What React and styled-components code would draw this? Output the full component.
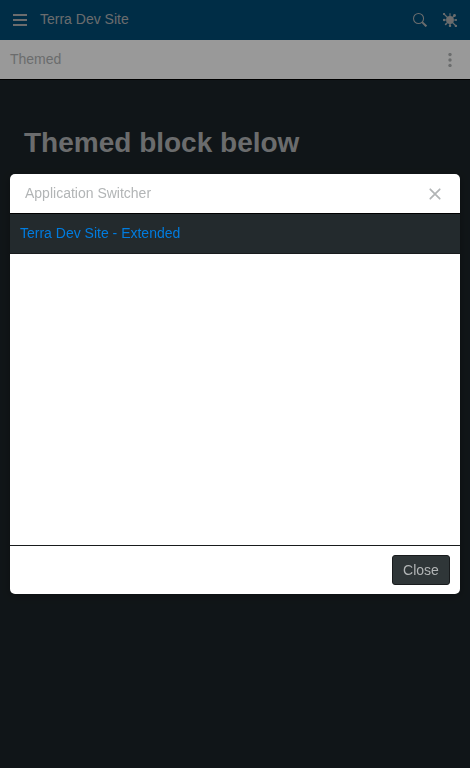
import React from 'react';
import styled, { createGlobalStyle } from 'styled-components';

const GlobalStyle = createGlobalStyle`
  *, *::before, *::after { box-sizing: border-box; }
  html, body { margin: 0; padding: 0; overflow: hidden; background: #111518; }
  body { font-family: "Liberation Sans", Arial, sans-serif; font-size: 14px; line-height: 1.4; }
`;

const Page = styled.div`
  height: 100vh;
  background: #1c2428;
`;

const NavBar = styled.header`
  display: flex;
  align-items: center;
  height: 40px;
  background: #004c76;
  color: #b2b5b6;
`;

const IconButton = styled.button`
  display: flex;
  align-items: center;
  justify-content: center;
  width: ${({ $width }) => $width || 30}px;
  height: 100%;
  padding: 0;
  border: 0;
  background: transparent;
  color: inherit;
`;

const NavTitle = styled.div`
  flex: 1;
  line-height: 20px;
  padding-bottom: 2px;
`;

const NavTools = styled.div`
  display: flex;
  height: 100%;
  padding-right: 5px;
`;

const SubBar = styled.div`
  display: flex;
  align-items: center;
  justify-content: space-between;
  height: 40px;
  padding: 0 5px 0 10px;
  background: #fff;
  border-bottom: 1px solid #000;
  color: #b2b5b6;
`;

const Heading = styled.h1`
  margin: 0;
  padding: 43px 24px 0;
  font-size: 28px;
  line-height: 40px;
  color: #b2b5b6;
`;

const Overlay = styled.div`
  position: fixed;
  inset: 0;
  display: flex;
  align-items: center;
  justify-content: center;
  padding: 0 10px;
  background: rgba(0, 0, 0, 0.4);
`;

const Dialog = styled.section`
  display: flex;
  flex-direction: column;
  width: 100%;
  height: 420px;
  overflow: hidden;
  border-radius: 5px;
  background: #fff;
  box-shadow: 0 2px 8px rgba(0, 0, 0, 0.3);
`;

const DialogHeader = styled.header`
  display: flex;
  align-items: center;
  justify-content: space-between;
  flex: none;
  height: 40px;
  padding: 0 10px 0 15px;
  border-bottom: 1px solid #000;
  color: #b2b5b6;
`;

const DialogBody = styled.div`
  flex: 1;
`;

const AppLink = styled.a`
  display: flex;
  align-items: center;
  height: 40px;
  padding: 0 10px;
  background: #232a2d;
  border-bottom: 1px solid #181b1d;
  color: #007cdf;
  text-decoration: none;
`;

const DialogFooter = styled.footer`
  display: flex;
  align-items: center;
  justify-content: flex-end;
  flex: none;
  height: 49px;
  padding: 0 10px;
  border-top: 1px solid #181b1d;
`;

const CloseButton = styled.button`
  width: 58px;
  height: 30px;
  padding: 0;
  border: 1px solid #181b1d;
  border-radius: 3px;
  background: #2f3638;
  color: #b2b5b6;
  font: inherit;
  line-height: 20px;
`;

const MenuIcon = () => (
  <svg width="14" height="14" viewBox="0 0 14 14" fill="currentColor">
    <path d="M0 1h14v2H0zM0 6h14v2H0zM0 11h14v2H0z" />
  </svg>
);

const SearchIcon = () => (
  <svg width="14" height="14" viewBox="0 0 48 48" fill="none" stroke="currentColor">
    <circle cx="19" cy="19" r="17.2" strokeWidth="3.6" />
    <path d="M31 31l3 3" strokeWidth="4" />
    <path d="M33 33l13 13" strokeWidth="7" />
  </svg>
);

const BurstIcon = () => (
  <svg width="14" height="14" viewBox="0 0 14 14" fill="currentColor" stroke="currentColor">
    <circle cx="7" cy="7" r="3.9" stroke="none" />
    <path d="M1 1l3.5 3.5M13 13L9.5 9.5M11.2 2.8L9.5 4.5M2.6 11.4L4.5 9.5M7 0.2V4M7 10v3.6M0.6 7h3M10.5 7h3" strokeWidth="1.1" />
    <g stroke="none">
      <circle cx="1" cy="1" r="1.1" />
      <circle cx="11.5" cy="2.5" r="1.4" />
      <circle cx="12.9" cy="12.9" r="1.2" />
      <circle cx="2.7" cy="11.3" r="0.9" />
      <circle cx="1.1" cy="7" r="1.2" />
      <circle cx="7" cy="12.8" r="1.25" />
      <circle cx="13" cy="7" r="1" />
    </g>
  </svg>
);

const MoreIcon = () => (
  <svg width="14" height="14" viewBox="0 0 14 14" fill="currentColor">
    <circle cx="7" cy="1.6" r="1.7" />
    <circle cx="7" cy="7" r="1.7" />
    <circle cx="7" cy="12.4" r="1.7" />
  </svg>
);

const CloseIcon = () => (
  <svg width="12" height="12" viewBox="0 0 12 12" fill="none" stroke="currentColor" strokeWidth="1.75" strokeLinecap="round">
    <path d="M1.3 1.3l9.4 9.4M10.7 1.3l-9.4 9.4" />
  </svg>
);

export default function App() {
  return (
    <>
      <GlobalStyle />
      <Page>
        <NavBar>
          <IconButton $width={40} aria-label="Menu"><MenuIcon /></IconButton>
          <NavTitle>Terra Dev Site</NavTitle>
          <NavTools>
            <IconButton aria-label="Search"><SearchIcon /></IconButton>
            <IconButton aria-label="Settings"><BurstIcon /></IconButton>
          </NavTools>
        </NavBar>
        <SubBar>
          <NavTitle>Themed</NavTitle>
          <IconButton aria-label="More"><MoreIcon /></IconButton>
        </SubBar>
        <Heading>Themed block below</Heading>
      </Page>
      <Overlay>
        <Dialog role="dialog" aria-label="Application Switcher">
          <DialogHeader>
            Application Switcher
            <IconButton aria-label="Close dialog"><CloseIcon /></IconButton>
          </DialogHeader>
          <DialogBody>
            <AppLink>Terra Dev Site - Extended</AppLink>
          </DialogBody>
          <DialogFooter>
            <CloseButton>Close</CloseButton>
          </DialogFooter>
        </Dialog>
      </Overlay>
    </>
  );
}
